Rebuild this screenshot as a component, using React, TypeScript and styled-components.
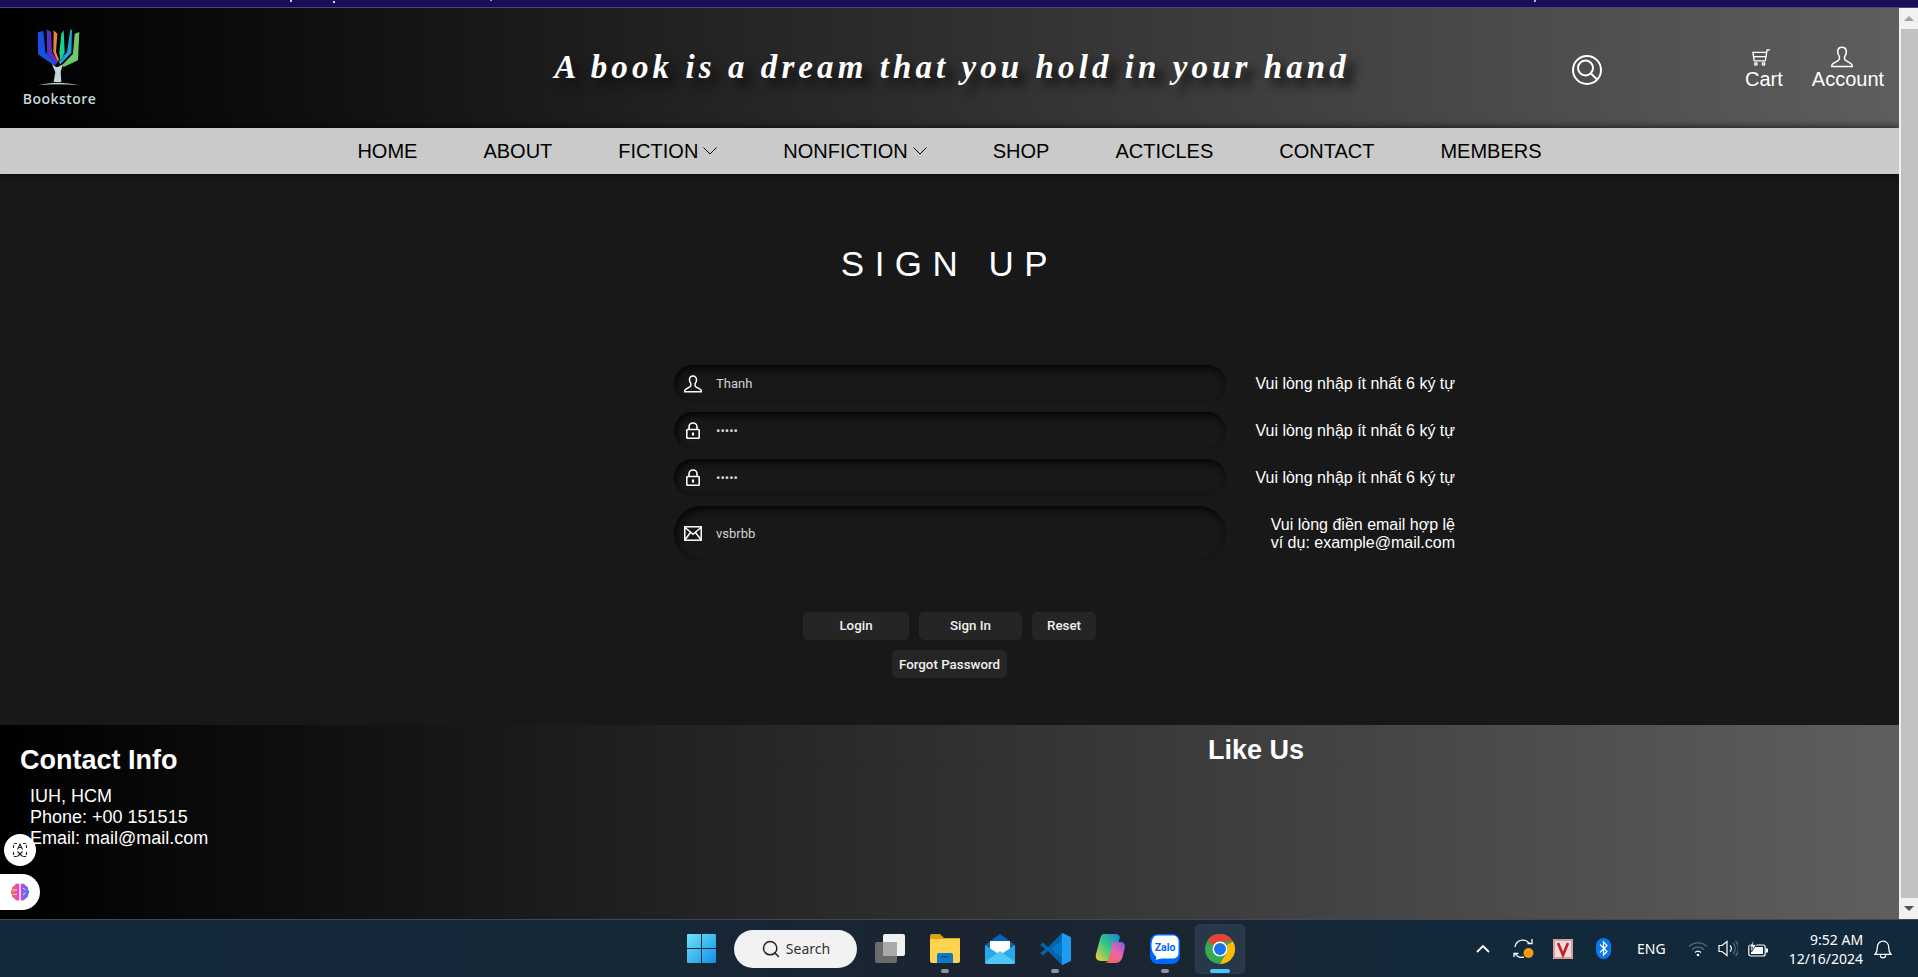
import React from 'react';
import styled, { createGlobalStyle } from 'styled-components';
import { Search } from 'lucide-react';

const GlobalStyle = createGlobalStyle`
  html, body {
    margin: 0;
    padding: 0;
    height: 100%;
    overflow: hidden;
    background: #181818;
    font-family: 'Liberation Sans', Arial, sans-serif;
  }
`;

const Screen = styled.div`
  width: 1918px;
  height: 977px;
  display: flex;
  flex-direction: column;
  overflow: hidden;
`;

const WallpaperStrip = styled.div`
  height: 7px;
  flex: none;
  border-bottom: 1px solid #4b4292;
  background-color: #190e55;
  background-image:
    radial-gradient(circle at 291px 1px, #c9c6e6 0, #c9c6e6 1px, transparent 1.5px),
    radial-gradient(circle at 334px 2px, #d8d6ee 0, #d8d6ee 1px, transparent 1.5px),
    radial-gradient(circle at 491px 0, #9c97cf 0, #9c97cf 1px, transparent 1.5px),
    radial-gradient(circle at 1535px 1px, #b8b4dd 0, #b8b4dd 1px, transparent 1.5px);
`;

const Browser = styled.div`
  flex: 1;
  min-height: 0;
  display: flex;
`;

const Page = styled.div`
  flex: 1;
  min-width: 0;
  display: flex;
  flex-direction: column;
  position: relative;
  overflow: hidden;
`;

const Scrollbar = styled.div`
  width: 19px;
  flex: none;
  display: flex;
  flex-direction: column;
  align-items: flex-end;
  background: #f1f1f1;
`;

const ScrollArrow = styled.div<{ $down?: boolean }>`
  width: 19px;
  height: 21px;
  flex: none;
  display: flex;
  align-items: center;
  justify-content: center;

  &::after {
    content: '';
    width: 0;
    height: 0;
    border-left: 5px solid transparent;
    border-right: 5px solid transparent;
    border-${p => (p.$down ? 'top' : 'bottom')}: 5px solid ${p => (p.$down ? '#505050' : '#a3a3a3')};
  }
`;

const ScrollThumb = styled.div`
  flex: 1;
  width: 17px;
  background: #c1c1c1;
`;

const Header = styled.header`
  height: 120px;
  flex: none;
  display: flex;
  align-items: center;
  padding-left: 24px;
  box-sizing: border-box;
  background: linear-gradient(90deg, #000 0%, #5e5e5e 100%);
`;

const Brand = styled.div`
  width: 71px;
  flex: none;
  display: flex;
  flex-direction: column;
  align-items: center;
  margin-top: -2px;
`;

const BrandName = styled.div`
  font-family: 'Open Sans', sans-serif;
  font-size: 14px;
  line-height: 16px;
  font-weight: 600;
  letter-spacing: 0.45px;
  color: #c6d6dd;
  margin-top: 4px;
  white-space: nowrap;
`;

const Tagline = styled.h2`
  width: 800px;
  flex: none;
  margin: -2px 0 0 457px;
  font-family: 'Liberation Serif', serif;
  font-style: italic;
  font-weight: 700;
  font-size: 33px;
  letter-spacing: 4.08px;
  line-height: 40px;
  color: #fff;
  white-space: nowrap;
  text-align: center;
  text-shadow: 8px 8px 10px #0f0f0f;
`;

const SearchButton = styled.div`
  flex: none;
  display: flex;
  margin: 4px 0 0 220px;
`;

const HeaderLink = styled.div<{ $gap: number }>`
  flex: none;
  display: flex;
  flex-direction: column;
  align-items: center;
  margin-left: ${p => p.$gap}px;
  margin-top: 1px;
  color: #fff;
  font-size: 20px;
  line-height: 23px;
`;

const HeaderLinkIcon = styled.span<{ $pull: number }>`
  height: 22px;
  display: flex;
  align-items: center;
  margin-right: ${p => p.$pull}px;
`;

const Nav = styled.nav`
  height: 46px;
  flex: none;
  display: flex;
  align-items: center;
  justify-content: center;
  gap: 66px;
  position: relative;
  background: #cacaca;
  box-shadow: 0 0 8px rgba(0, 0, 0, 0.85);
`;

const NavItem = styled.a`
  display: flex;
  align-items: center;
  gap: 5px;
  font-size: 20px;
  line-height: 23px;
  color: #000;
`;

const Main = styled.main`
  flex: 1;
  min-height: 0;
  display: flex;
  flex-direction: column;
  align-items: center;
  background: #181818;
  padding-top: 70px;
  box-sizing: border-box;
`;

const Title = styled.h1`
  margin: 0 0 81px;
  font-size: 35px;
  line-height: 40px;
  font-weight: 400;
  letter-spacing: 10.5px;
  color: #fff;
`;

const Form = styled.form`
  width: 781px;
  margin-left: 230px;
  display: flex;
  flex-direction: column;
  gap: 10px;
`;

const FieldRow = styled.div`
  display: grid;
  grid-template-columns: 552px 1fr;
  align-items: center;
`;

const Field = styled.label<{ $tall?: boolean }>`
  height: ${p => (p.$tall ? 55 : 37)}px;
  display: flex;
  align-items: center;
  padding-left: 9px;
  box-sizing: border-box;
  border-radius: ${p => (p.$tall ? 28 : 19)}px;
  background: #181818;
  box-shadow: inset 2px 4px 7px rgb(6, 6, 6);
`;

const FieldIcon = styled.span`
  width: 20px;
  height: 20px;
  flex: none;
  display: flex;
  align-items: center;
  justify-content: center;
`;

const FieldInput = styled.input`
  flex: 1;
  min-width: 0;
  margin-left: 13px;
  padding: 0;
  border: 0;
  outline: 0;
  background: transparent;
  font-family: Roboto, sans-serif;
  font-size: 13px;
  color: #d3d3d3;
`;

const Hint = styled.div`
  font-size: 16px;
  line-height: 18px;
  color: #fff;
  text-align: right;
`;

const Actions = styled.div`
  display: flex;
  justify-content: center;
  gap: 10px;
  margin-top: 51px;
`;

const ActionButton = styled.button<{ $width: number }>`
  width: ${p => p.$width}px;
  height: 28px;
  padding: 0 0 1px;
  border: 0;
  border-radius: 5px;
  background: #252525;
  font-family: Roboto, sans-serif;
  font-size: 13.33px;
  font-weight: 500;
  color: #f0f0f0;
`;

const SecondaryActions = styled(Actions)`
  margin-top: 10px;

  ${ActionButton} {
    padding: 0;
  }
`;

const Footer = styled.footer`
  height: 194px;
  flex: none;
  display: grid;
  grid-template-columns: 1208px 1fr;
  box-sizing: border-box;
  background: linear-gradient(90deg, #000 0%, #5f5f5f 100%);
  color: #fff;
`;

const ContactColumn = styled.div`
  padding: 20px 0 0 20px;
`;

const FooterHeading = styled.h3`
  margin: 0;
  font-size: 27px;
  line-height: 30px;
  font-weight: 700;
`;

const LikeColumn = styled.div`
  padding-top: 10px;
`;

const ContactList = styled.div`
  margin: 11px 0 0 10px;
  font-size: 18px;
  line-height: 21px;
`;

const FloatingCircle = styled.div`
  position: absolute;
  left: 4px;
  bottom: 53px;
  width: 32px;
  height: 32px;
  border-radius: 50%;
  background: #fff;
  display: flex;
  align-items: center;
  justify-content: center;
`;

const FloatingTab = styled.div`
  position: absolute;
  left: 0;
  bottom: 9px;
  width: 40px;
  height: 36px;
  border-radius: 0 18px 18px 0;
  background: #fff;
  display: flex;
  align-items: center;
  justify-content: center;
`;

const Taskbar = styled.div`
  height: 58px;
  flex: none;
  display: flex;
  align-items: center;
  box-sizing: border-box;
  padding-left: 676px;
  border-top: 1px solid #3d4a54;
  background: linear-gradient(90deg, #13283a 0%, #142838 30%, #1b2430 50%, #1a2632 62%, #12293b 75%, #12293b 100%);
`;

const TaskGroup = styled.div`
  display: flex;
  align-items: center;
  gap: 5px;
`;

const TaskSlot = styled.div<{ $active?: boolean; $mark?: 'dot' | 'bar' }>`
  width: 50px;
  height: 50px;
  position: relative;
  display: flex;
  align-items: center;
  justify-content: center;
  border-radius: 5px;
  background: ${p => (p.$active ? '#26384a' : 'transparent')};
  box-shadow: ${p => (p.$active ? 'inset 0 0 0 1px #2c3d4d' : 'none')};

  &::after {
    content: ${p => (p.$mark ? "''" : 'none')};
    position: absolute;
    bottom: 1px;
    left: 50%;
    transform: translateX(-50%);
    width: ${p => (p.$mark === 'bar' ? 20 : 8)}px;
    height: 4px;
    border-radius: 2px;
    background: ${p => (p.$mark === 'bar' ? '#4cc2ff' : '#8f9499')};
  }
`;

const SearchPill = styled.div`
  width: 123px;
  height: 38px;
  margin: 0 8px;
  box-sizing: border-box;
  display: flex;
  align-items: center;
  justify-content: center;
  gap: 5px;
  border-radius: 19px;
  background: #f2f2f2;
  font-family: 'Noto Sans', sans-serif;
  font-size: 14px;
  color: #333;
`;

const Tray = styled.div`
  margin-left: auto;
  width: 442px;
  height: 100%;
  display: flex;
  align-items: center;
  color: #fff;
`;

const TrayItem = styled.div<{ $gap: number }>`
  display: flex;
  align-items: center;
  justify-content: center;
  flex: none;
  margin-left: ${p => p.$gap}px;
`;

const TrayText = styled.div`
  font-family: 'Noto Sans', sans-serif;
  font-size: 14px;
  line-height: 19px;
  color: #fff;
  text-align: right;
  white-space: nowrap;
`;

const PersonIcon = ({ size = 22, weight = 1.5 }: { size?: number; weight?: number }) => (
  <svg width={size} height={size} viewBox="0 0 22 22" fill="none" stroke="#fff" strokeWidth={weight}>
    <path d="M11 1.2c-2.8 0-4.3 2-4.3 4.6 0 2 .8 3.6 1.7 4.8v2c0 .9-.5 1.5-1.4 2L2 17.6c-.9.6-1.3 1.4-1.3 3h20.6c0-1.6-.4-2.4-1.3-3l-5-2.9c-.9-.5-1.4-1.1-1.4-2v-2c.9-1.2 1.7-2.8 1.7-4.8 0-2.6-1.5-4.6-4.3-4.6z" />
  </svg>
);

const LockIcon = () => (
  <svg width="16" height="17" viewBox="0 0 16 17" fill="none" stroke="#fff" strokeWidth="1.6">
    <path d="M4 7.5V5a4 4 0 0 1 8 0v2.5" />
    <rect x="1.8" y="7.5" width="12.4" height="8.7" rx="0.8" />
    <path d="M8 10.5v3" strokeWidth="2.2" />
  </svg>
);

const MailIcon = () => (
  <svg width="18" height="15" viewBox="0 0 18 15" fill="none" stroke="#fff" strokeWidth="1.5">
    <rect x="0.8" y="0.8" width="16.4" height="13.4" />
    <path d="M1 1.5l8 6.8 8-6.8M1 13.8l5.5-7.3M17 13.8l-5.5-7.3" />
  </svg>
);

const SearchCircleIcon = () => (
  <svg width="30" height="30" viewBox="0 0 30 30" fill="none" stroke="#fff" strokeWidth="2">
    <circle cx="15" cy="15" r="14" />
    <circle cx="13.5" cy="13" r="7.5" />
    <path d="M19 18.5l6 6" />
  </svg>
);

const CartIcon = () => (
  <svg width="22" height="17" viewBox="0 0 22 20" fill="none" stroke="#fff" strokeWidth="1.6">
    <path d="M21.5 1h-3.3l-2.2 13H3L1.500 4h16" />
    <path d="M2.2 9h14.8" />
    <circle cx="5" cy="17.5" r="1.5" />
    <circle cx="14" cy="17.5" r="1.5" />
  </svg>
);

const NavChevron = () => (
  <svg width="14" height="14" viewBox="0 0 14 14" fill="none" stroke="#000" strokeWidth="1">
    <path d="M.5 3.5L7 10l6.5-6.5" />
  </svg>
);

const TrayChevron = () => (
  <svg width="14" height="14" viewBox="0 0 14 14" fill="none" stroke="#fff" strokeWidth="1.8">
    <path d="M1 10l6-6 6 6" />
  </svg>
);

const Logo = () => (
  <svg width="45" height="60" viewBox="55 10 135 180">
    <path fill="#1a4fe4" d="M58 25L74 22L80 85L112 120L108 126L58 92Z" />
    <path fill="#5a2dc4" d="M84 17L97 25L100 85L118 115L112 122L85 90Z" />
    <path fill="#e9853a" d="M105 20L116 30L112 85L122 110L116 112L104 85Z" />
    <path fill="#17d38e" d="M135 20L128 30L122 88L125 110L132 100L138 85Z" />
    <path fill="#12a6dc" d="M155 17L160 20L158 88L125 122L120 115L145 85Z" />
    <path fill="#6fc96c" d="M182 25L168 30L163 90L130 125L135 130L178 110Z" />
    <path fill="#c8d7dd" d="M100 122L112 130L118 130L132 122L126 145L128 175L105 175L110 145Z" />
    <path fill="#c8d7dd" d="M58 185Q115 170 182 185Q115 178 58 185Z" />
  </svg>
);

const TranslateIcon = () => (
  <svg width="16" height="16" viewBox="0 0 16 16" fill="none" stroke="#222" strokeWidth="1.1">
    <path d="M5 1.5H3A1.5 1.5 0 0 0 1.5 3v3M11 1.5h2A1.5 1.5 0 0 1 14.5 3v3M1.5 10v3A1.5 1.5 0 0 0 3 14.5h2M14.5 10v3a1.5 1.5 0 0 1-1.5 1.5h-2" strokeDasharray="3 1" />
    <path d="M5.5 7.5L8 2l2.5 5.5M6.5 5.5h3M5.5 9.5l5 5M10.5 9.5l-5 5" />
  </svg>
);

const BrainIcon = () => (
  <svg width="20" height="20" viewBox="0 0 20 20">
    <defs>
      <linearGradient id="brainFill" x1="0" y1="0" x2="1" y2="0">
        <stop offset="0" stopColor="#f5793b" />
        <stop offset="0.45" stopColor="#e03fd8" />
        <stop offset="1" stopColor="#3a7cf5" />
      </linearGradient>
    </defs>
    <path fill="url(#brainFill)" d="M9.3 2C7.5.8 5 1.6 4.5 3.7 2.5 4 1.3 6 2 7.8.4 9 .4 11.3 2 12.5c-.6 1.9.8 3.7 2.6 3.9C5.2 18.5 7.6 19.2 9.3 18ZM10.7 2c1.8-1.2 4.3-.4 4.8 1.7 2 .3 3.2 2.3 2.5 4.1 1.6 1.2 1.6 3.5 0 4.7.6 1.9-.8 3.7-2.6 3.9-.6 2.1-3 2.8-4.7 1.6Z" />
    <path stroke="#fff" strokeWidth="0.8" fill="none" d="M3 8h4M3.5 12.5H7M13 6l2.5 2M13 13l2.5-2" />
  </svg>
);

const WindowsIcon = () => (
  <svg width="29" height="29" viewBox="0 0 29 29">
    <defs>
      <linearGradient id="winFill" x1="0" y1="0" x2="1" y2="1">
        <stop offset="0" stopColor="#6fe4fb" />
        <stop offset="1" stopColor="#0f8fe6" />
      </linearGradient>
    </defs>
    <path fill="url(#winFill)" d="M1 0h13v14H0V1a1 1 0 0 1 1-1ZM15 0h13a1 1 0 0 1 1 1v13H15ZM0 15h14v14H1a1 1 0 0 1-1-1ZM15 15h14v13a1 1 0 0 1-1 1H15Z" />
  </svg>
);

const TaskViewIcon = () => (
  <svg width="30" height="29" viewBox="0 0 30 29">
    <rect x="8" y="0" width="22" height="22" rx="2" fill="#f1f1f1" />
    <rect x="0" y="8" width="22" height="21" rx="2" fill="#6b6b6b" />
    <rect x="8" y="8" width="14" height="14" fill="#a9a9a9" />
  </svg>
);

const ExplorerIcon = () => (
  <svg width="30" height="29" viewBox="0 0 30 29">
    <path fill="#d9a514" d="M0 2a2 2 0 0 1 2-2h8l4 4h16v8H0Z" />
    <path fill="#ffd34f" d="M0 5h30v22a2 2 0 0 1-2 2H2a2 2 0 0 1-2-2Z" />
    <path fill="#0f78c9" d="M7 21a2 2 0 0 1 2-2h12a2 2 0 0 1 2 2v8H7Z" />
    <rect x="11" y="22" width="8" height="1.5" fill="#0b4f87" />
  </svg>
);

const MailAppIcon = () => (
  <svg width="30" height="30" viewBox="0 0 30 30">
    <path fill="#0a63b5" d="M15 0L30 11v4H0v-4Z" />
    <path fill="#fff" d="M5 7h20v14H5Z" />
    <path fill="#28a8ea" d="M0 11l15 10 15-10v17a2 2 0 0 1-2 2H2a2 2 0 0 1-2-2Z" />
    <path fill="#50c8f5" d="M0 28L15 17l15 11a2 2 0 0 1-2 2H2a2 2 0 0 1-2-2Z" />
  </svg>
);

const VsCodeIcon = () => (
  <svg width="31" height="32" viewBox="0 0 31 32">
    <path fill="#0065a9" d="M22 0L31 4.3v23.4L22 32 8 18l-5 4.5L0 20l5.5-4L0 12l3-2.5L8 14Z" />
    <path fill="#007acc" d="M22 0l9 4.3v23.4L22 32V8L11 16l11 8Z" />
    <path fill="#1f9cf0" d="M22 0l9 4.3v23.4L22 32Z" />
  </svg>
);

const CopilotIcon = () => (
  <svg width="30" height="31" viewBox="0 0 30 31">
    <defs>
      <linearGradient id="copA" x1="0" y1="1" x2="1" y2="0">
        <stop offset="0" stopColor="#f7d13c" />
        <stop offset="0.5" stopColor="#36c77f" />
        <stop offset="1" stopColor="#1f7fe8" />
      </linearGradient>
      <linearGradient id="copB" x1="0" y1="1" x2="1" y2="0">
        <stop offset="0" stopColor="#f2693b" />
        <stop offset="0.55" stopColor="#f063a9" />
        <stop offset="1" stopColor="#6f62ea" />
      </linearGradient>
    </defs>
    <path fill="url(#copA)" d="M9 1h12c2 0 3 1 4 3l-6 21c-.5 2-2 3-4 3H6c-4 0-6-3-5-7L5 6c.6-3 2-5 4-5Z" />
    <path fill="url(#copB)" d="M17 9h9c3 0 4.5 3 3.6 6.5l-2 8C26.5 28 24 30 20 30H9c2.5 0 4-1 4.8-4L17 14c.3-2 0-5 0-5Z" />
  </svg>
);

const ZaloIcon = () => (
  <svg width="30" height="30" viewBox="0 0 30 30">
    <path fill="#0068ff" d="M8 0h14a8 8 0 0 1 8 8v14a8 8 0 0 1-8 8H8a8 8 0 0 1-8-8V8a8 8 0 0 1 8-8Z" />
    <path fill="#fff" d="M7 1.5h16c3.5 0 5.5 2.5 5.5 6v11c0 3.5-2 6-5.5 6H12c-2 0-4 1-6.500 1.500 1-1 1.300-2.500 0-4C3 19.500 1.500 16 1.500 12.500 1.500 6 3.500 1.500 7 1.500Z" />
    <text x="15" y="17" textAnchor="middle" fontFamily="Roboto, sans-serif" fontSize="10.5" fontWeight="700" fill="#0068ff">Zalo</text>
  </svg>
);

const ChromeIcon = () => (
  <svg width="30" height="30" viewBox="0 0 30 30">
    <circle cx="15" cy="15" r="15" fill="#34a853" />
    <path fill="#ea4335" d="M15 0a15 15 0 0 1 13 7.5H15a7.5 7.5 0 0 0-6.900 4.600L2.500 6A15 15 0 0 1 15 0Z" />
    <path fill="#fbbc04" d="M28 7.5A15 15 0 0 1 15 30l6.500-11.200a7.500 7.500 0 0 0 0-7.600Z" />
    <circle cx="15" cy="15" r="7.5" fill="#fff" />
    <circle cx="15" cy="15" r="6" fill="#1a73e8" />
  </svg>
);

const SyncIcon = () => (
  <svg width="21" height="21" viewBox="0 0 21 21" fill="none" stroke="#fff" strokeWidth="1.3">
    <path d="M2 9a8 8 0 0 1 14-4M19 1v4.5h-4.5M1 19v-3.5h4.5M2 15.5A8 8 0 0 0 11 19" />
    <circle cx="15.5" cy="15" r="5" fill="#f79a0e" stroke="none" />
  </svg>
);

const VIcon = () => (
  <svg width="20" height="20" viewBox="0 0 20 20">
    <rect width="20" height="20" fill="#f3d9d6" />
    <rect x="1" y="1" width="18" height="18" fill="none" stroke="#c48f8a" strokeWidth="1.5" />
    <path fill="none" stroke="#c41f26" strokeWidth="2.6" d="M5 4l5 12 5-12" />
  </svg>
);

const BluetoothIcon = () => (
  <svg width="15" height="21" viewBox="0 0 15 21">
    <rect width="15" height="21" rx="7.5" fill="#0a78e8" />
    <path fill="none" stroke="#fff" strokeWidth="1.2" d="M4 6.5l7 7-3.5 3.5v-13l3.5 3.5-7 7" />
  </svg>
);

const WifiIcon = () => (
  <svg width="20" height="16" viewBox="0 0 20 16" fill="none" stroke="#5a6a77" strokeWidth="1.2">
    <path d="M1 5.5a13 13 0 0 1 18 0M4 8.5a9 9 0 0 1 12 0" />
    <path stroke="#fff" d="M7 11.5a4.500 4.500 0 0 1 6 0" />
    <circle cx="10" cy="14" r="1.3" fill="#fff" stroke="none" />
  </svg>
);

const SpeakerIcon = () => (
  <svg width="20" height="17" viewBox="0 0 20 17" fill="none" stroke="#fff" strokeWidth="1.2">
    <path d="M1 5.5h3L9 1.5v14l-5-4H1Z" />
    <path d="M12 5.5a4 4 0 0 1 0 6" />
    <path stroke="#5a6a77" d="M15 3a8 8 0 0 1 0 11M17.5 1a11 11 0 0 1 0 15" />
  </svg>
);

const BatteryIcon = () => (
  <svg width="20" height="18" viewBox="0 0 20 18" fill="none" stroke="#fff" strokeWidth="1.2">
    <rect x="0.8" y="5" width="16.4" height="11" rx="2" />
    <rect x="3" y="7" width="12" height="7" fill="#fff" stroke="none" />
    <rect x="18" y="8.5" width="2" height="4" fill="#fff" stroke="none" />
    <path fill="#fff" stroke="#12293b" strokeWidth="0.8" d="M5.5 0L1.5 7h3l-1 5 5-7.5H5Z" />
  </svg>
);

const BellIcon = () => (
  <svg width="18" height="20" viewBox="0 0 17 19" fill="none" stroke="#fff" strokeWidth="1.2">
    <path d="M1 14.5c1.5-1.5 2-3 2-6 0-3.5 2-6.500 5.500-6.500S14 5 14 8.500c0 3 .5 4.500 2 6Z" />
    <path d="M6 15.5a2.5 2.5 0 0 0 5 0" />
  </svg>
);

const navItems = [
  { label: 'HOME' },
  { label: 'ABOUT' },
  { label: 'FICTION', menu: true },
  { label: 'NONFICTION', menu: true },
  { label: 'SHOP' },
  { label: 'ACTICLES' },
  { label: 'CONTACT' },
  { label: 'MEMBERS' },
];

const passwordHint = 'Vui lòng nhập ít nhất 6 ký tự';

export default function App() {
  return (
    <Screen>
      <GlobalStyle />
      <WallpaperStrip />
      <Browser>
        <Page>
          <Header>
            <Brand>
              <Logo />
              <BrandName>Bookstore</BrandName>
            </Brand>
            <Tagline>A book is a dream that you hold in your hand</Tagline>
            <SearchButton>
              <SearchCircleIcon />
            </SearchButton>
            <HeaderLink $gap={143}>
              <HeaderLinkIcon $pull={6}>
                <CartIcon />
              </HeaderLinkIcon>
              Cart
            </HeaderLink>
            <HeaderLink $gap={29}>
              <HeaderLinkIcon $pull={11}>
                <PersonIcon />
              </HeaderLinkIcon>
              Account
            </HeaderLink>
          </Header>
          <Nav>
            {navItems.map(item => (
              <NavItem key={item.label}>
                {item.label}
                {item.menu && <NavChevron />}
              </NavItem>
            ))}
          </Nav>
          <Main>
            <Title>SIGN UP</Title>
            <Form>
              <FieldRow>
                <Field>
                  <FieldIcon>
                    <PersonIcon size={18} weight={1.8} />
                  </FieldIcon>
                  <FieldInput type="text" defaultValue="Thanh" />
                </Field>
                <Hint>{passwordHint}</Hint>
              </FieldRow>
              <FieldRow>
                <Field>
                  <FieldIcon>
                    <LockIcon />
                  </FieldIcon>
                  <FieldInput type="password" defaultValue="abcde" />
                </Field>
                <Hint>{passwordHint}</Hint>
              </FieldRow>
              <FieldRow>
                <Field>
                  <FieldIcon>
                    <LockIcon />
                  </FieldIcon>
                  <FieldInput type="password" defaultValue="abcde" />
                </Field>
                <Hint>{passwordHint}</Hint>
              </FieldRow>
              <FieldRow>
                <Field $tall>
                  <FieldIcon>
                    <MailIcon />
                  </FieldIcon>
                  <FieldInput type="text" defaultValue="vsbrbb" />
                </Field>
                <Hint>
                  Vui lòng điền email hợp lệ
                  <br />
                  ví dụ: example@mail.com
                </Hint>
              </FieldRow>
            </Form>
            <Actions>
              <ActionButton $width={106}>Login</ActionButton>
              <ActionButton $width={103}>Sign In</ActionButton>
              <ActionButton $width={64}>Reset</ActionButton>
            </Actions>
            <SecondaryActions>
              <ActionButton $width={115}>Forgot Password</ActionButton>
            </SecondaryActions>
          </Main>
          <Footer>
            <ContactColumn>
              <FooterHeading>Contact Info</FooterHeading>
              <ContactList>
                IUH, HCM
                <br />
                Phone: +00 151515
                <br />
                Email: mail@mail.com
              </ContactList>
            </ContactColumn>
            <LikeColumn>
              <FooterHeading>Like Us</FooterHeading>
            </LikeColumn>
          </Footer>
          <FloatingCircle>
            <TranslateIcon />
          </FloatingCircle>
          <FloatingTab>
            <BrainIcon />
          </FloatingTab>
        </Page>
        <Scrollbar>
          <ScrollArrow />
          <ScrollThumb />
          <ScrollArrow $down />
        </Scrollbar>
      </Browser>
      <Taskbar>
        <TaskSlot>
          <WindowsIcon />
        </TaskSlot>
        <SearchPill>
          <Search size={20} strokeWidth={1.75} color="#222" />
          Search
        </SearchPill>
        <TaskGroup>
          <TaskSlot>
            <TaskViewIcon />
          </TaskSlot>
          <TaskSlot $mark="dot">
            <ExplorerIcon />
          </TaskSlot>
          <TaskSlot>
            <MailAppIcon />
          </TaskSlot>
          <TaskSlot $mark="dot">
            <VsCodeIcon />
          </TaskSlot>
          <TaskSlot>
            <CopilotIcon />
          </TaskSlot>
          <TaskSlot $mark="dot">
            <ZaloIcon />
          </TaskSlot>
          <TaskSlot $active $mark="bar">
            <ChromeIcon />
          </TaskSlot>
        </TaskGroup>
        <Tray>
          <TrayItem $gap={0}>
            <TrayChevron />
          </TrayItem>
          <TrayItem $gap={23}>
            <SyncIcon />
          </TrayItem>
          <TrayItem $gap={19}>
            <VIcon />
          </TrayItem>
          <TrayItem $gap={23}>
            <BluetoothIcon />
          </TrayItem>
          <TrayItem $gap={26}>
            <TrayText>ENG</TrayText>
          </TrayItem>
          <TrayItem $gap={22}>
            <WifiIcon />
          </TrayItem>
          <TrayItem $gap={10}>
            <SpeakerIcon />
          </TrayItem>
          <TrayItem $gap={10}>
            <BatteryIcon />
          </TrayItem>
          <TrayItem $gap={21}>
            <TrayText>
              9:52 AM
              <br />
              12/16/2024
            </TrayText>
          </TrayItem>
          <TrayItem $gap={11}>
            <BellIcon />
          </TrayItem>
        </Tray>
      </Taskbar>
    </Screen>
  );
}
